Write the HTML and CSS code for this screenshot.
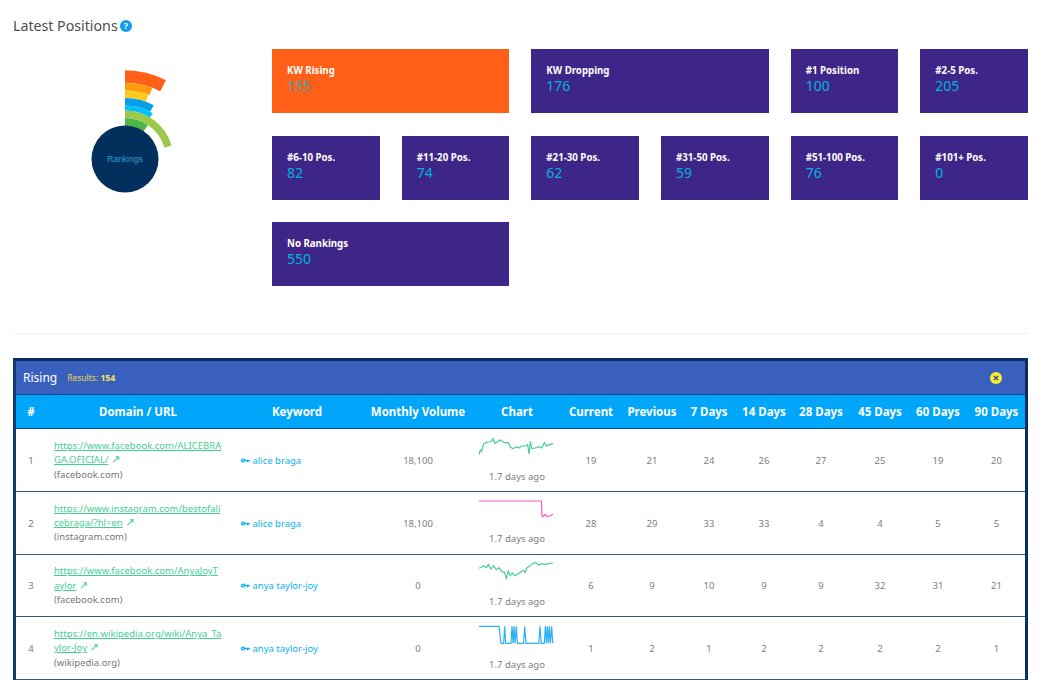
FILE: index.html
```html
<!DOCTYPE html>
<html lang="en">
<head>
    <meta charset="UTF-8">
    <title>Latest Positions</title>
    <link rel="stylesheet" href="styles.css">
</head>
<body>
    <div class="page">
        <h2 class="title">Latest Positions
            <svg class="help" viewBox="0 0 12 12"><circle cx="6" cy="6" r="6"/><text x="6" y="9.3">?</text></svg>
        </h2>

        <div class="summary">
            <div class="radial">
                <svg viewBox="0 0 90 132" width="90" height="132">
                    <g fill="none">
                        <path d="M37 11.5A82.5 82.5 0 0 1 75.1 20.8" stroke="#ff5f17" stroke-width="12.5"/>
                        <path d="M37 21.75A72.25 72.25 0 0 1 62.9 26.5" stroke="#ff9a0b" stroke-width="7.5"/>
                        <path d="M37 29.25A64.75 64.75 0 0 1 59.1 33.1" stroke="#ffc91f" stroke-width="7.5"/>
                        <path d="M37 36.75A57.25 57.25 0 0 1 63.9 43.5" stroke="#049fe9" stroke-width="7.5"/>
                        <path d="M37 43A51 51 0 0 1 63.3 50.3" stroke="#00bfff" stroke-width="5"/>
                        <path d="M37 57A37 37 0 0 1 57.7 63.3" stroke="#4db748" stroke-width="8"/>
                        <path d="M37 49.25A44.75 44.75 0 0 1 80 81.6" stroke="#9bc94c" stroke-width="7.5"/>
                    </g>
                    <circle cx="37" cy="94" r="33.5" fill="#022f5c"/>
                    <text class="radial-label" x="37" y="96.5">Rankings</text>
                </svg>
            </div>

            <div class="tiles">
                <div class="tile tile-wide tile-hot"><span class="tile-name">KW Rising</span><span class="tile-num">155</span></div>
                <div class="tile tile-wide"><span class="tile-name">KW Dropping</span><span class="tile-num">176</span></div>
                <div class="tile"><span class="tile-name">#1 Position</span><span class="tile-num">100</span></div>
                <div class="tile"><span class="tile-name">#2-5 Pos.</span><span class="tile-num">205</span></div>
                <div class="tile"><span class="tile-name">#6-10 Pos.</span><span class="tile-num">82</span></div>
                <div class="tile"><span class="tile-name">#11-20 Pos.</span><span class="tile-num">74</span></div>
                <div class="tile"><span class="tile-name">#21-30 Pos.</span><span class="tile-num">62</span></div>
                <div class="tile"><span class="tile-name">#31-50 Pos.</span><span class="tile-num">59</span></div>
                <div class="tile"><span class="tile-name">#51-100 Pos.</span><span class="tile-num">76</span></div>
                <div class="tile"><span class="tile-name">#101+ Pos.</span><span class="tile-num">0</span></div>
                <div class="tile tile-wide"><span class="tile-name">No Rankings</span><span class="tile-num">550</span></div>
            </div>
        </div>

        <hr class="divider">

        <div class="panel">
            <div class="panel-head">
                <span class="panel-title">Rising</span>
                <span class="panel-results">Results: <b>154</b></span>
                <svg class="panel-close" viewBox="0 0 12 12"><circle cx="6" cy="6" r="6"/><path d="M3.9 3.9l4.2 4.2M8.1 3.9L3.9 8.1"/></svg>
            </div>
            <table class="rank-table">
                <colgroup>
                    <col class="c-num"><col class="c-url"><col class="c-kw"><col class="c-vol"><col class="c-chart">
                    <col class="c-cur"><col class="c-prev"><col class="c-7"><col class="c-14"><col class="c-28">
                    <col class="c-45"><col class="c-60"><col class="c-90">
                </colgroup>
                <thead>
                    <tr>
                        <th>#</th><th class="head-url">Domain / URL</th><th>Keyword</th><th>Monthly Volume</th><th>Chart</th>
                        <th>Current</th><th>Previous</th><th>7 Days</th><th>14 Days</th><th>28 Days</th>
                        <th>45 Days</th><th>60 Days</th><th>90 Days</th>
                    </tr>
                </thead>
                <tbody>
                    <tr>
                        <td>1</td>
                        <td class="cell-url"><a href="#">https://www.facebook.com/ALICEBRA<br>GA.OFICIAL/</a> <span class="ext">↗</span><br><span class="domain">(facebook.com)</span></td>
                        <td class="cell-kw"><svg class="key" viewBox="0 0 9 5"><circle cx="2" cy="2.5" r="1.4"/><path d="M3.4 2.5H8.6M6.4 2.5V4.2M8 2.5V3.8"/></svg> alice braga</td>
                        <td>18,100</td>
                        <td class="cell-chart">
                            <svg class="spark" viewBox="0 0 225 75"><polyline class="line-green" points="0,65 4,51 8,55 14,33 20,29 30,27 38,25 42,17 48,31 56,27 62,21 70,25 76,29 88,29 94,43 102,47 112,41 120,45 128,39 138,39 146,35 150,63 154,25 158,47 168,45 180,41 188,45 196,29 202,39 212,35 222,31"/></svg>
                            <span class="ago">1.7 days ago</span>
                        </td>
                        <td>19</td><td>21</td><td>24</td><td>26</td><td>27</td><td>25</td><td>19</td><td>20</td>
                    </tr>
                    <tr>
                        <td>2</td>
                        <td class="cell-url"><a href="#">https://www.instagram.com/bestofali<br>cebraga/?hl=en</a> <span class="ext">↗</span><br><span class="domain">(instagram.com)</span></td>
                        <td class="cell-kw"><svg class="key" viewBox="0 0 9 5"><circle cx="2" cy="2.5" r="1.4"/><path d="M3.4 2.5H8.6M6.4 2.5V4.2M8 2.5V3.8"/></svg> alice braga</td>
                        <td>18,100</td>
                        <td class="cell-chart">
                            <svg class="spark" viewBox="0 0 225 75"><polyline class="line-pink" points="0,18 187,18 189,63 192,65 198,58 204,65 212,63 222,58"/></svg>
                            <span class="ago">1.7 days ago</span>
                        </td>
                        <td>28</td><td>29</td><td>33</td><td>33</td><td>4</td><td>4</td><td>5</td><td>5</td>
                    </tr>
                    <tr>
                        <td>3</td>
                        <td class="cell-url"><a href="#">https://www.facebook.com/AnyaJoyT<br>aylor</a> <span class="ext">↗</span><br><span class="domain">(facebook.com)</span></td>
                        <td class="cell-kw"><svg class="key" viewBox="0 0 9 5"><circle cx="2" cy="2.5" r="1.4"/><path d="M3.4 2.5H8.6M6.4 2.5V4.2M8 2.5V3.8"/></svg> anya taylor-joy</td>
                        <td>0</td>
                        <td class="cell-chart">
                            <svg class="spark" viewBox="0 0 225 75"><polyline class="line-green" points="0,31 8,27 14,23 22,29 28,19 36,33 44,23 52,35 60,29 68,41 76,43 82,61 88,39 94,53 100,45 108,53 118,47 126,41 132,37 138,43 144,29 152,25 160,17 170,13 178,21 188,17 198,19 210,17 222,15"/></svg>
                            <span class="ago">1.7 days ago</span>
                        </td>
                        <td>6</td><td>9</td><td>10</td><td>9</td><td>9</td><td>32</td><td>31</td><td>21</td>
                    </tr>
                    <tr>
                        <td>4</td>
                        <td class="cell-url"><a href="#">https://en.wikipedia.org/wiki/Anya_Ta<br>ylor-Joy</a> <span class="ext">↗</span><br><span class="domain">(wikipedia.org)</span></td>
                        <td class="cell-kw"><svg class="key" viewBox="0 0 9 5"><circle cx="2" cy="2.5" r="1.4"/><path d="M3.4 2.5H8.6M6.4 2.5V4.2M8 2.5V3.8"/></svg> anya taylor-joy</td>
                        <td>0</td>
                        <td class="cell-chart">
                            <svg class="spark" viewBox="0 0 225 75"><polyline class="line-blue" points="0,16 60,16 66,67 74,67 77,16 80,67 96,67 99,16 102,67 105,16 108,67 112,16 115,67 134,67 137,16 141,67 180,67 183,16 187,67 196,67 199,16 202,67 205,16 208,67 211,16 214,67 218,16 221,67"/></svg>
                            <span class="ago">1.7 days ago</span>
                        </td>
                        <td>1</td><td>2</td><td>1</td><td>2</td><td>2</td><td>2</td><td>2</td><td>1</td>
                    </tr>
                </tbody>
            </table>
        </div>
    </div>
</body>
</html>
```
FILE: styles.css
```css
html {
    overflow: hidden;
}
body {
    margin: 0;
    font-family: "Noto Sans", sans-serif;
    background: #fff;
    color: #777;
}
.page {
    padding: 0 16px 0 13px;
}

/* top part */
.title {
    margin: 0;
    padding-top: 16px;
    height: 33px;
    font-size: 14.2px;
    line-height: 20px;
    font-weight: 400;
    color: #4d4d4d;
}
.help {
    width: 12px;
    height: 12px;
    vertical-align: -1px;
    margin-left: -1px;
}
.help circle {
    fill: #0f9ceb;
}
.help text {
    fill: #fff;
    font-size: 9px;
    font-weight: 700;
    text-anchor: middle;
}
.summary {
    display: flex;
}
.radial {
    width: 259px;
    flex-shrink: 0;
    padding: 16px 0 0 75px;
    box-sizing: border-box;
}
.radial-label {
    font-family: "Liberation Sans", sans-serif;
    font-size: 8.5px;
    fill: #2f9ccb;
    text-anchor: middle;
}
.tiles {
    flex: 1;
    display: grid;
    grid-template-columns: repeat(6, 1fr);
    grid-auto-rows: 64px;
    gap: 22.5px 22px;
}
.tile {
    display: flex;
    flex-direction: column;
    padding: 15px 15px 0;
    background: #3e2689;
    color: #fff;
}
.tile-wide {
    grid-column: span 2;
}
.tile-hot {
    background: #ff5f17;
}
.tile-name {
    font-size: 9.7px;
    line-height: 14px;
    font-weight: 700;
}
.tile-num {
    font-size: 14px;
    line-height: 16px;
    color: #00b5dd;
}
.tile-hot .tile-num {
    color: #2fa5b5;
}
.divider {
    height: 1px;
    margin: 47px 0 24px;
    border: none;
    background: #eee;
}

/* rising table */
.panel {
    border: 3px solid #0c2d60;
    border-left-color: #123c6e;
    border-bottom: none;
}
.panel-head {
    display: flex;
    align-items: center;
    height: 33px;
    padding: 0 23px 0 7px;
    background: #3a60bd;
    border-bottom: 1px solid #1c4690;
}
.panel-title {
    font-size: 12px;
    color: #fff;
}
.panel-results {
    margin-left: 10px;
    font-size: 8.5px;
    color: #ecd64c;
}
.panel-results b {
    color: #ffe94d;
}
.panel-close {
    width: 12px;
    height: 12px;
    margin-left: auto;
}
.panel-close circle {
    fill: #ffeb2e;
}
.panel-close path {
    stroke: #2c4fa5;
    stroke-width: 1.4;
    fill: none;
}
.rank-table {
    width: 100%;
    table-layout: fixed;
    border-collapse: collapse;
}
.c-num { width: 30px; }
.c-url { width: 188px; }
.c-kw { width: 126px; }
.c-vol { width: 116px; }
.c-chart { width: 82px; }
.c-cur { width: 66px; }
.c-prev { width: 56px; }
.c-7 { width: 58px; }
.c-14 { width: 52px; }
.c-28 { width: 62px; }
.c-45 { width: 56px; }
.c-60 { width: 60px; }
.c-90 { width: 57px; }
.rank-table th {
    height: 33px;
    padding: 0;
    background: #00a6fa;
    border-bottom: 1px solid #14508c;
    color: #fff;
    font-size: 11.5px;
    font-weight: 700;
    white-space: nowrap;
}
.rank-table th.head-url {
    padding-right: 4px;
}
.rank-table td {
    box-sizing: border-box;
    height: 62.75px;
    padding: 1px 0 0;
    border-bottom: 1px solid #33577c;
    font-size: 9.5px;
    color: #7d7d7d;
    text-align: center;
}
.rank-table td.cell-url {
    padding-left: 8px;
    text-align: left;
    line-height: 14.3px;
    white-space: nowrap;
}
.cell-url a {
    color: #43cf93;
}
.ext {
    color: #43cf93;
    font-family: "DejaVu Sans", sans-serif;
    font-size: 11px;
    line-height: 10px;
}
.domain {
    color: #777;
}
.rank-table td.cell-kw {
    padding-left: 7px;
    text-align: left;
    color: #08b1f5;
}
.key {
    width: 9px;
    height: 5px;
    vertical-align: 1px;
}
.key circle {
    fill: none;
    stroke: #08b1f5;
    stroke-width: 1.4;
}
.key path {
    fill: none;
    stroke: #08b1f5;
    stroke-width: 1.3;
}
.rank-table td.cell-chart {
    vertical-align: top;
    padding-top: 3.5px;
}
.spark {
    display: block;
    width: 75px;
    height: 25px;
    margin: 0 auto 12px 3px;
}
.spark polyline {
    fill: none;
    stroke-width: 3.6;
}
.line-green { stroke: #48cf95; }
.line-pink { stroke: #fb55c0; }
.line-blue { stroke: #2cb0f6; }
.ago {
    display: block;
    font-size: 9.5px;
    line-height: 14px;
}
```
